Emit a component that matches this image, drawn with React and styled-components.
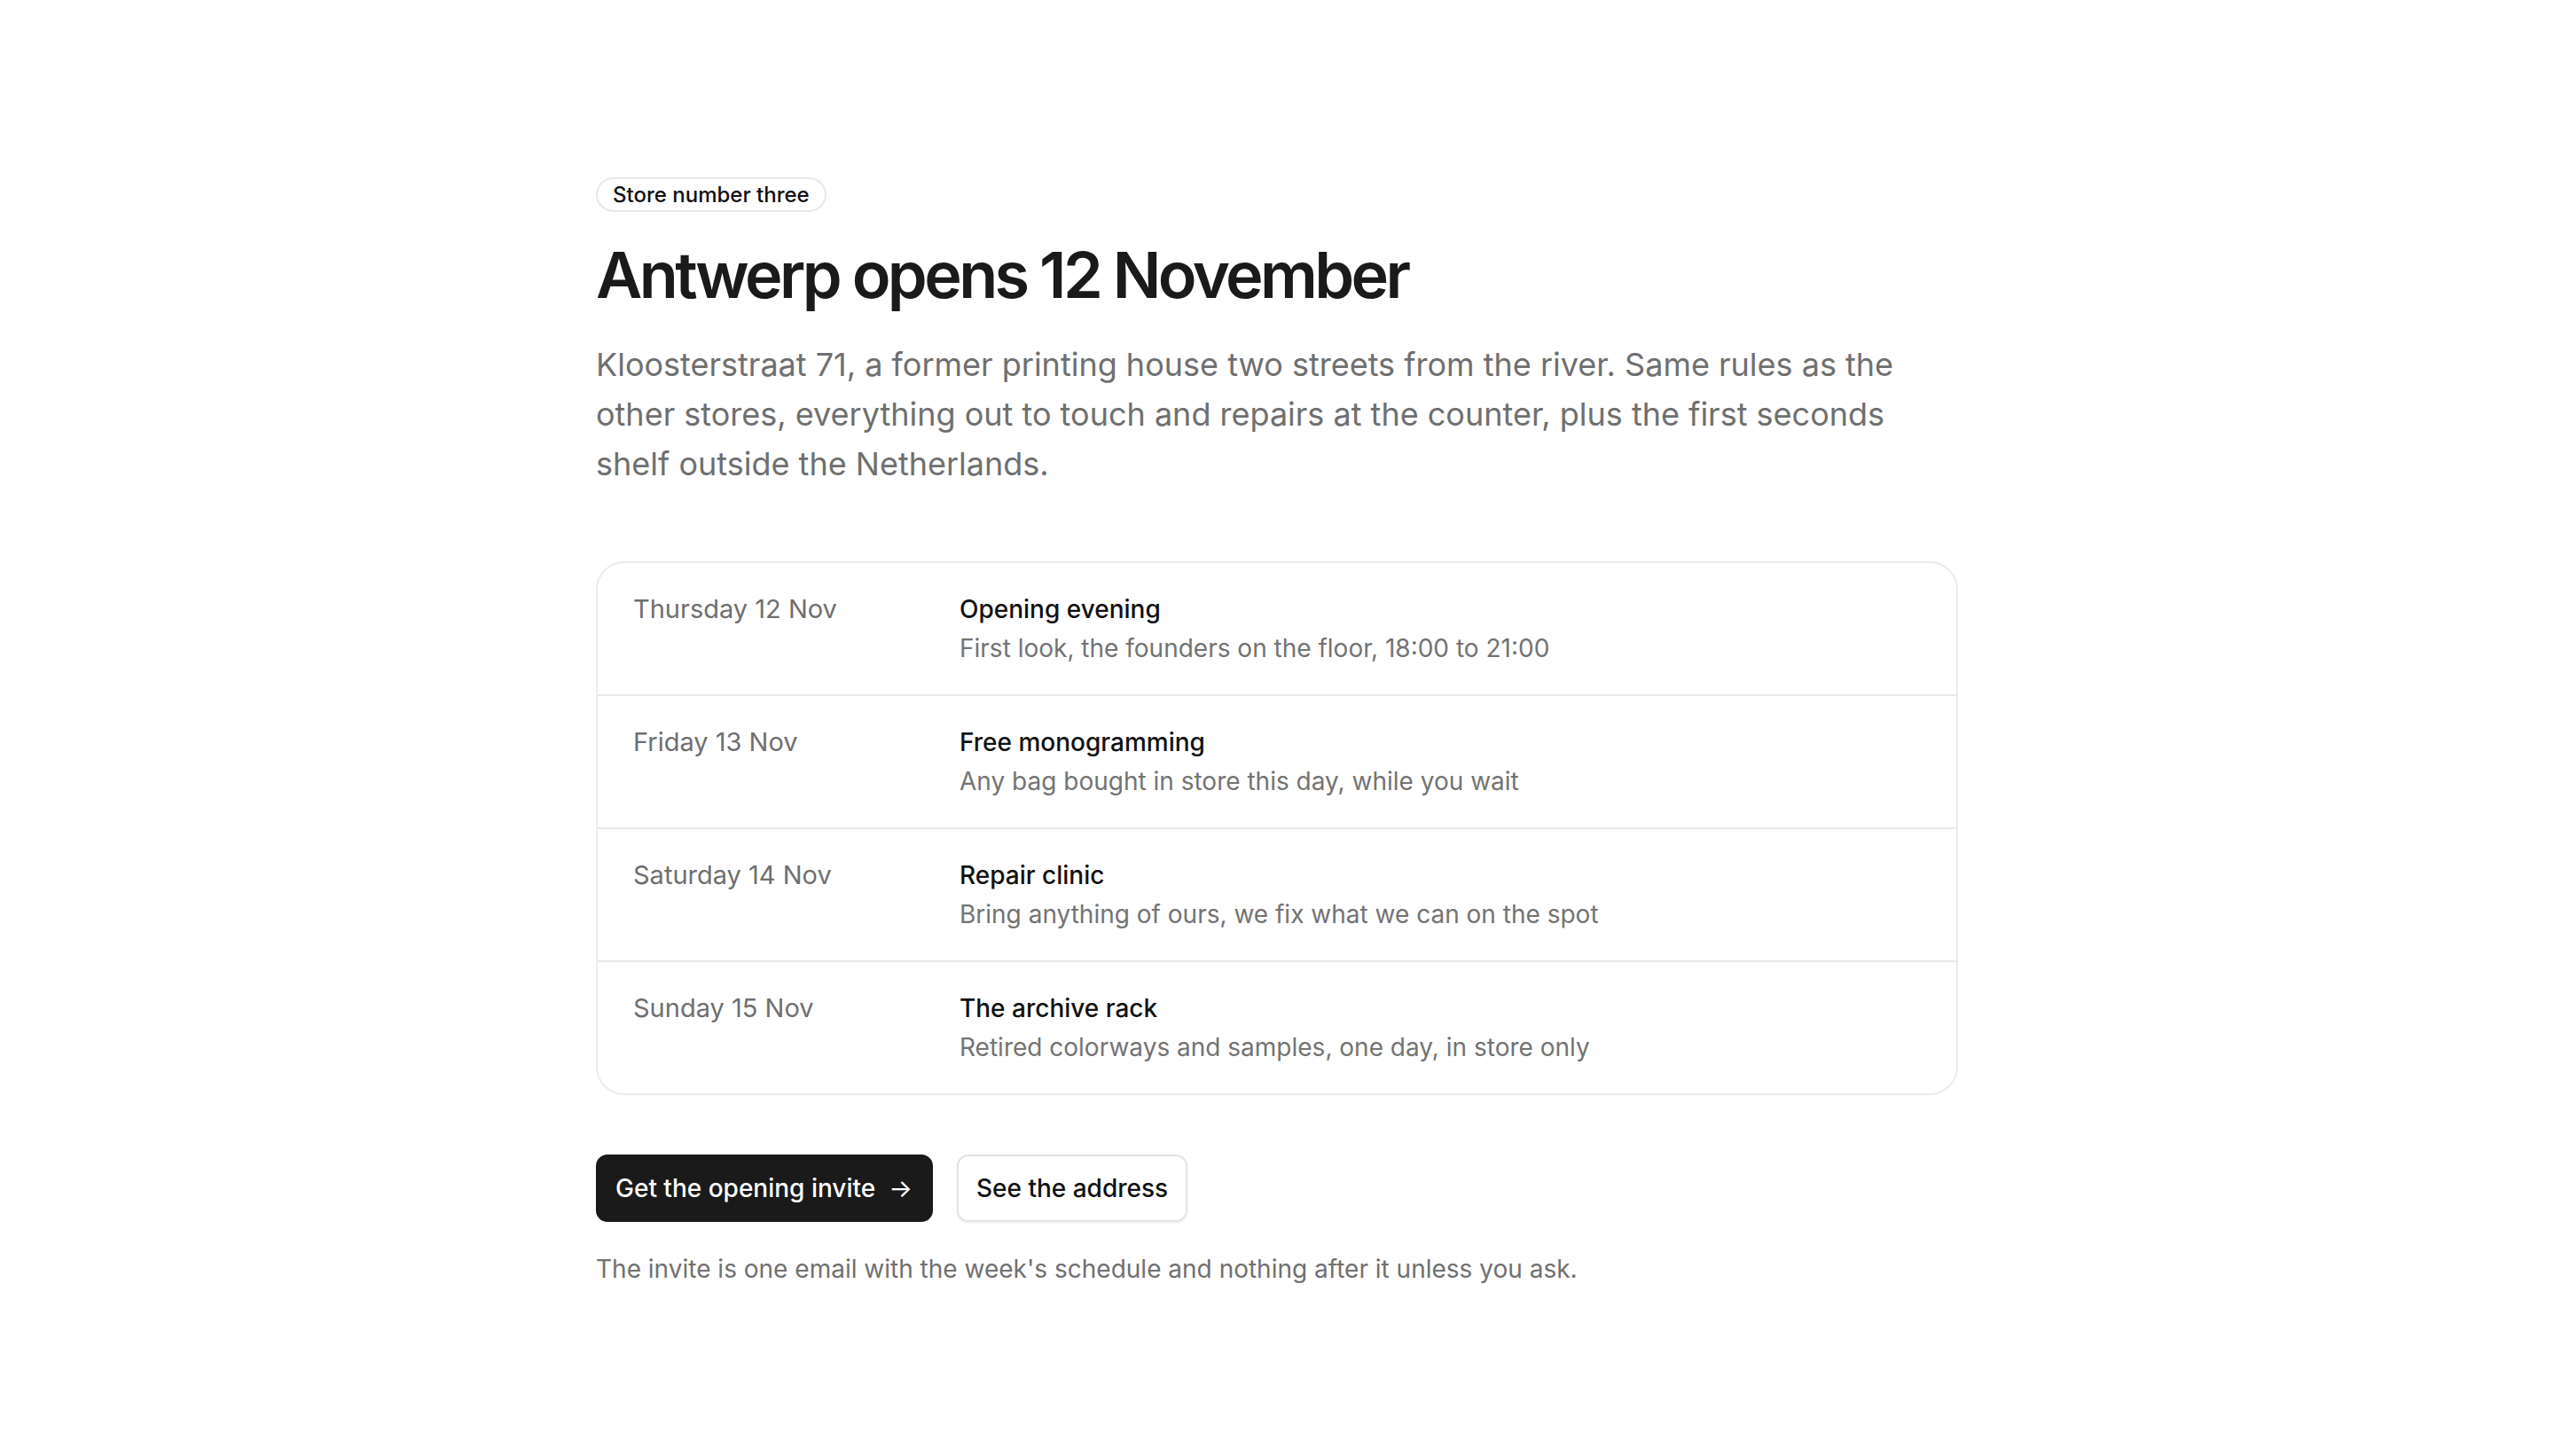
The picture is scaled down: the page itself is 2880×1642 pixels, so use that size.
import React from 'react'
import styled, { createGlobalStyle } from 'styled-components'

const GlobalStyle = createGlobalStyle`
  html, body {
    margin: 0;
    padding: 0;
    background: #ffffff;
  }
  body {
    font-family: Inter, "Noto Sans", sans-serif;
    color: #1a1a1a;
    -webkit-font-smoothing: antialiased;
  }
`

const Page = styled.main`
  max-width: 1536px;
  margin: 0 auto;
  padding: 200px 0 160px;
`
const Badge = styled.span`
  display: inline-flex;
  align-items: center;
  height: 39px;
  box-sizing: border-box;
  padding: 0 17px;
  border: 2px solid #e8e8e8;
  border-radius: 999px;
  font-size: 24px;
  font-weight: 500;
  color: #111111;
`
const Title = styled.h1`
  margin: 31px 0 0;
  font-size: 72px;
  line-height: 79px;
  font-weight: 600;
  letter-spacing: -0.05em;
  color: #1a1a1a;
`
const Lead = styled.p`
  max-width: 1490px;
  margin: 34px 0 0;
  font-size: 36px;
  line-height: 56px;
  color: #6f6f6f;
`
const Schedule = styled.ul`
  list-style: none;
  margin: 82px 0 0;
  padding: 0;
  border: 2px solid #ececec;
  border-radius: 32px;
  overflow: hidden;
`
const Day = styled.li`
  display: grid;
  grid-template-columns: 368px 1fr;
  padding: 30px 40px;
  border-top: ${(props) => (props.first ? 'none' : '2px solid #e8e8e8')};
`
const Date = styled.span`
  font-size: 29px;
  line-height: 44px;
  color: #6f6f6f;
`
const Event = styled.div`
  display: flex;
  flex-direction: column;
`
const EventName = styled.span`
  font-size: 28px;
  line-height: 44px;
  font-weight: 500;
  color: #111111;
`
const EventNote = styled.span`
  font-size: 28px;
  line-height: 44px;
  color: #737373;
`
const Actions = styled.div`
  display: flex;
  gap: 27px;
  margin-top: 67px;
`
const Button = styled.button`
  display: inline-flex;
  align-items: center;
  height: 76px;
  box-sizing: border-box;
  padding: 0 ${(props) => (props.primary ? '21px' : '20px')} 0 20px;
  font-family: inherit;
  font-size: 28px;
  font-weight: 500;
  color: ${(props) => (props.primary ? '#ffffff' : '#111111')};
  background: ${(props) => (props.primary ? '#1a1a1a' : '#ffffff')};
  border: 2px solid ${(props) => (props.primary ? '#1a1a1a' : '#e3e3e3')};
  border-radius: 13px;
  box-shadow: ${(props) =>
    props.primary ? 'none' : '0 2px 3px rgba(0, 0, 0, 0.05)'};
  cursor: pointer;
`
const Arrow = styled.span`
  margin-left: 15px;
  font-weight: 400;
`
const Footnote = styled.p`
  margin: 33px 0 0;
  font-size: 28px;
  line-height: 40px;
  color: #707070;
`

const days = [
  {
    date: 'Thursday 12 Nov',
    name: 'Opening evening',
    note: 'First look, the founders on the floor, 18:00 to 21:00',
  },
  {
    date: 'Friday 13 Nov',
    name: 'Free monogramming',
    note: 'Any bag bought in store this day, while you wait',
  },
  {
    date: 'Saturday 14 Nov',
    name: 'Repair clinic',
    note: 'Bring anything of ours, we fix what we can on the spot',
  },
  {
    date: 'Sunday 15 Nov',
    name: 'The archive rack',
    note: 'Retired colorways and samples, one day, in store only',
  },
]

export default function App() {
  return (
    <>
      <GlobalStyle />
      <Page>
        <Badge>Store number three</Badge>
        <Title>Antwerp opens 12 November</Title>
        <Lead>
          Kloosterstraat 71, a former printing house two streets from the
          river. Same rules as the other stores, everything out to touch and
          repairs at the counter, plus the first seconds shelf outside the
          Netherlands.
        </Lead>
        <Schedule>
          {days.map((day, i) => (
            <Day key={day.date} first={i === 0}>
              <Date>{day.date}</Date>
              <Event>
                <EventName>{day.name}</EventName>
                <EventNote>{day.note}</EventNote>
              </Event>
            </Day>
          ))}
        </Schedule>
        <Actions>
          <Button primary>
            Get the opening invite
            <Arrow>→</Arrow>
          </Button>
          <Button>See the address</Button>
        </Actions>
        <Footnote>
          The invite is one email with the week's schedule and nothing after
          it unless you ask.
        </Footnote>
      </Page>
    </>
  )
}
